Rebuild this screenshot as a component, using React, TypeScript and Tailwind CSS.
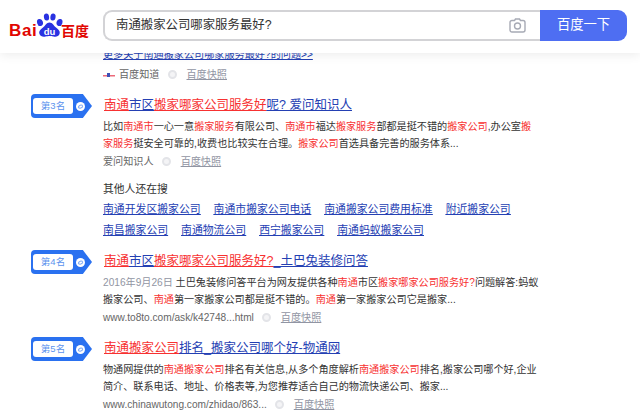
import React from "react";

const FONT = { fontFamily: '"Liberation Sans", "Noto Sans CJK SC", sans-serif' };

function Rich({ text }: { text: string }) {
  const parts = text.split(/(\{[^}]*\}|\[[^\]]*\])/);
  return (
    <>
      {parts.map((p, i) =>
        p.startsWith("{") ? (
          <span key={i} className="text-[#f73131]">{p.slice(1, -1)}</span>
        ) : p.startsWith("[") ? (
          <span key={i} className="text-[#9195a3]">{p.slice(1, -1)}</span>
        ) : (
          <span key={i}>{p}</span>
        )
      )}
    </>
  );
}

function Logo() {
  return (
    <svg width="82" height="26" viewBox="0 0 82 26" className="shrink-0">
      <text x="0" y="23.5" fontFamily="Liberation Sans" fontWeight="700" fontSize="17" fill="#e10601" letterSpacing="0.6">
        Bai
      </text>
      <g fill="#2932e1">
        <ellipse cx="31" cy="10.5" rx="2.9" ry="3.6" transform="rotate(-18 31 10.5)" />
        <ellipse cx="37.5" cy="5" rx="2.6" ry="3.6" transform="rotate(-8 37.5 5)" />
        <ellipse cx="44" cy="5" rx="2.6" ry="3.6" transform="rotate(8 44 5)" />
        <ellipse cx="50.5" cy="10.5" rx="2.9" ry="3.6" transform="rotate(18 50.5 10.5)" />
        <path d="M40.5 10.5c-3 0-4 3-6.5 5-2.5 2-4.5 3.5-3.5 6.5 .8 2.5 3.5 3 6 2.5 2-.4 3-.6 4-.6s2 .2 4 .6c2.5 .5 5.2 0 6-2.5 1-3-1-4.5-3.5-6.5-2.5-2-3.5-5-6.5-5z" />
      </g>
      <text x="40.5" y="23" textAnchor="middle" fontFamily="Liberation Sans" fontWeight="700" fontSize="9.5" fill="#fff">
        du
      </text>
      <text x="52" y="23.5" fontFamily="Noto Sans CJK SC" fontWeight="700" fontSize="14" fill="#e10601">
        百度
      </text>
    </svg>
  );
}

function Camera() {
  return (
    <svg width="17" height="15" viewBox="0 0 17 15" fill="none" stroke="#a7aab5" strokeWidth="1.4" className="shrink-0">
      <path d="M5.5 2.5 6.5 1h4l1 1.5h2.5a2 2 0 0 1 2 2V12a2 2 0 0 1-2 2H3a2 2 0 0 1-2-2V4.500a2 2 0 0 1 2-2z" />
      <circle cx="8.5" cy="8" r="3" />
    </svg>
  );
}

function Badge({ n }: { n: number }) {
  return (
    <div className="-mt-[1px] ml-[31px] flex h-[24px] w-[61px] items-center rounded-l-[4px] bg-[#2a71f0] pl-[2px] [clip-path:polygon(0_0,85%_0,100%_50%,85%_100%,0_100%)]">
      <span className="flex h-[16px] w-[40px] items-center justify-center rounded-[3px] bg-white text-[9.5px] text-[#5b93ee]">
        第{n}名
      </span>
      <svg width="9" height="9" viewBox="0 0 10 10" fill="none" className="ml-[3px]">
        <circle cx="5" cy="5" r="5" fill="#ffffff" />
        <path d="M2.5 6C3 3.5 6 2.5 7.5 4M7.5 4.5C7 7 4 7.5 2.5 6" stroke="#7ea9f5" strokeWidth="1.2" />
      </svg>
    </div>
  );
}

function Dot() {
  return <span className="ml-[8px] mr-[10px] inline-block h-[9px] w-[9px] shrink-0 rounded-full border-[2.5px] border-[#e3e4e8] bg-[#f4f4f6]" />;
}

function Source({ label, paw }: { label: string; paw?: boolean }) {
  return (
    <div className="flex h-[17px] items-center text-[10.15px] text-[#666]">
      {paw && (
        <svg width="12" height="6" viewBox="0 0 12 6" className="mr-[4px]">
          <rect x="0" y="3" width="12" height="1.5" fill="#ec6a7a" />
          <rect x="4" y="1" width="3" height="4" fill="#3f51b5" />
        </svg>
      )}
      <span>{label}</span>
      <Dot />
      <span className="text-[#9195a3] underline">百度快照</span>
    </div>
  );
}

function Result({
  n,
  title,
  lines,
  source,
  className,
}: {
  n: number;
  title: React.ReactNode;
  lines: string[];
  source: string;
  className?: string;
}) {
  return (
    <section className={"flex " + (className ?? "")}>
      <div className="w-[103px] shrink-0">
        <Badge n={n} />
      </div>
      <div className="flex flex-col">
        <h3 className="h-[21px] pl-[1px] text-[12.5px] leading-[21px] text-[#2440b3] underline">{title}</h3>
        <div className="mt-[2px] text-[10.15px] leading-[17px] text-[#333]">
          {lines.map((l, i) => (
            <p key={i} className="whitespace-nowrap">
              <Rich text={l} />
            </p>
          ))}
        </div>
        <div className="mt-[1px]">
          <Source label={source} />
        </div>
      </div>
    </section>
  );
}

const T = ({ children }: { children: React.ReactNode }) => (
  <span className="text-[#f73131] underline">{children}</span>
);

const row1 = ["南通开发区搬家公司", "南通市搬家公司电话", "南通搬家公司费用标准", "附近搬家公司"];
const row2 = ["南昌搬家公司", "南通物流公司", "西宁搬家公司", "南通蚂蚁搬家公司"];

export default function App() {
  return (
    <div className="relative h-[411px] w-[640px] overflow-hidden bg-white" style={FONT}>
      <header className="relative z-10 flex h-[53px] items-center bg-white pl-[9px] shadow-[0_2px_10px_rgba(0,0,0,0.08)]">
        <div className="flex h-[53px] w-[94px] items-start pt-[12px]">
          <Logo />
        </div>
        <div className="-mt-[3px] flex h-[31px] w-[437px] items-center justify-between rounded-l-[9px] border-2 border-r-0 border-[#d3d3d6] pl-[11px] pr-[14px]">
          <span className="text-[12.4px] text-[#333]">南通搬家公司哪家服务最好?</span>
          <Camera />
        </div>
        <button className="-mt-[3px] flex h-[31px] w-[87px] items-center justify-center rounded-r-[9px] bg-[#4e6ef2] text-[13.3px] text-white">
          百度一下
        </button>
      </header>

      <main className="flex flex-col">
        <div className="-mt-[5px] pl-[103px]">
          <a className="block h-[14px] text-[10.15px] leading-[14px] text-[#2440b3] underline">
            更多关于南通搬家公司哪家服务最好?的问题&gt;&gt;
          </a>
          <div className="mt-[4px]">
            <Source label="百度知道" paw />
          </div>
        </div>

        <Result
          n={3}
          className="mt-[12px]"
          title={
            <>
              <T>南通</T>市区<T>搬家哪家公司服务好</T>呢? 爱问知识人
            </>
          }
          lines={[
            "比如{南通市}一心一意{搬家服务}有限公司、{南通市}福达{搬家服务}部都是挺不错的{搬家公司},办公室{搬}",
            "{家服务}挺安全可靠的,收费也比较实在合理。{搬家公司}首选具备完善的服务体系...",
          ]}
          source="爱问知识人"
        />

        <div className="mt-[10px] pl-[103px]">
          <p className="h-[19px] text-[10.8px] leading-[19px] text-[#333]">其他人还在搜</p>
          <div className="flex h-[20px] items-center gap-[13px] text-[10.85px] text-[#2440b3] underline">
            {row1.map((s) => (
              <a key={s}>{s}</a>
            ))}
          </div>
          <div className="mt-[1px] flex h-[20px] items-center gap-[13px] text-[10.85px] text-[#2440b3] underline">
            {row2.map((s) => (
              <a key={s}>{s}</a>
            ))}
          </div>
        </div>

        <Result
          n={4}
          className="mt-[11px]"
          title={
            <>
              <T>南通</T>市区<T>搬家哪家公司服务好?</T>_土巴兔装修问答
            </>
          }
          lines={[
            "[2016年9月26日] 土巴兔装修问答平台为网友提供各种{南通}市区{搬家哪家公司服务好?}问题解答:蚂蚁",
            "搬家公司、{南通}第一家搬家公司都是挺不错的。{南通}第一家搬家公司它是搬家...",
          ]}
          source="www.to8to.com/ask/k42748...html"
        />

        <Result
          n={5}
          className="mt-[12px]"
          title={
            <>
              <T>南通搬家公司</T>排名_搬家公司哪个好-物通网
            </>
          }
          lines={[
            "物通网提供的{南通搬家公司}排名有关信息,从多个角度解析{南通搬家公司}排名,搬家公司哪个好,企业",
            "简介、联系电话、地址、价格表等,为您推荐适合自己的物流快递公司、搬家...",
          ]}
          source="www.chinawutong.com/zhidao/863..."
        />
      </main>
    </div>
  );
}
